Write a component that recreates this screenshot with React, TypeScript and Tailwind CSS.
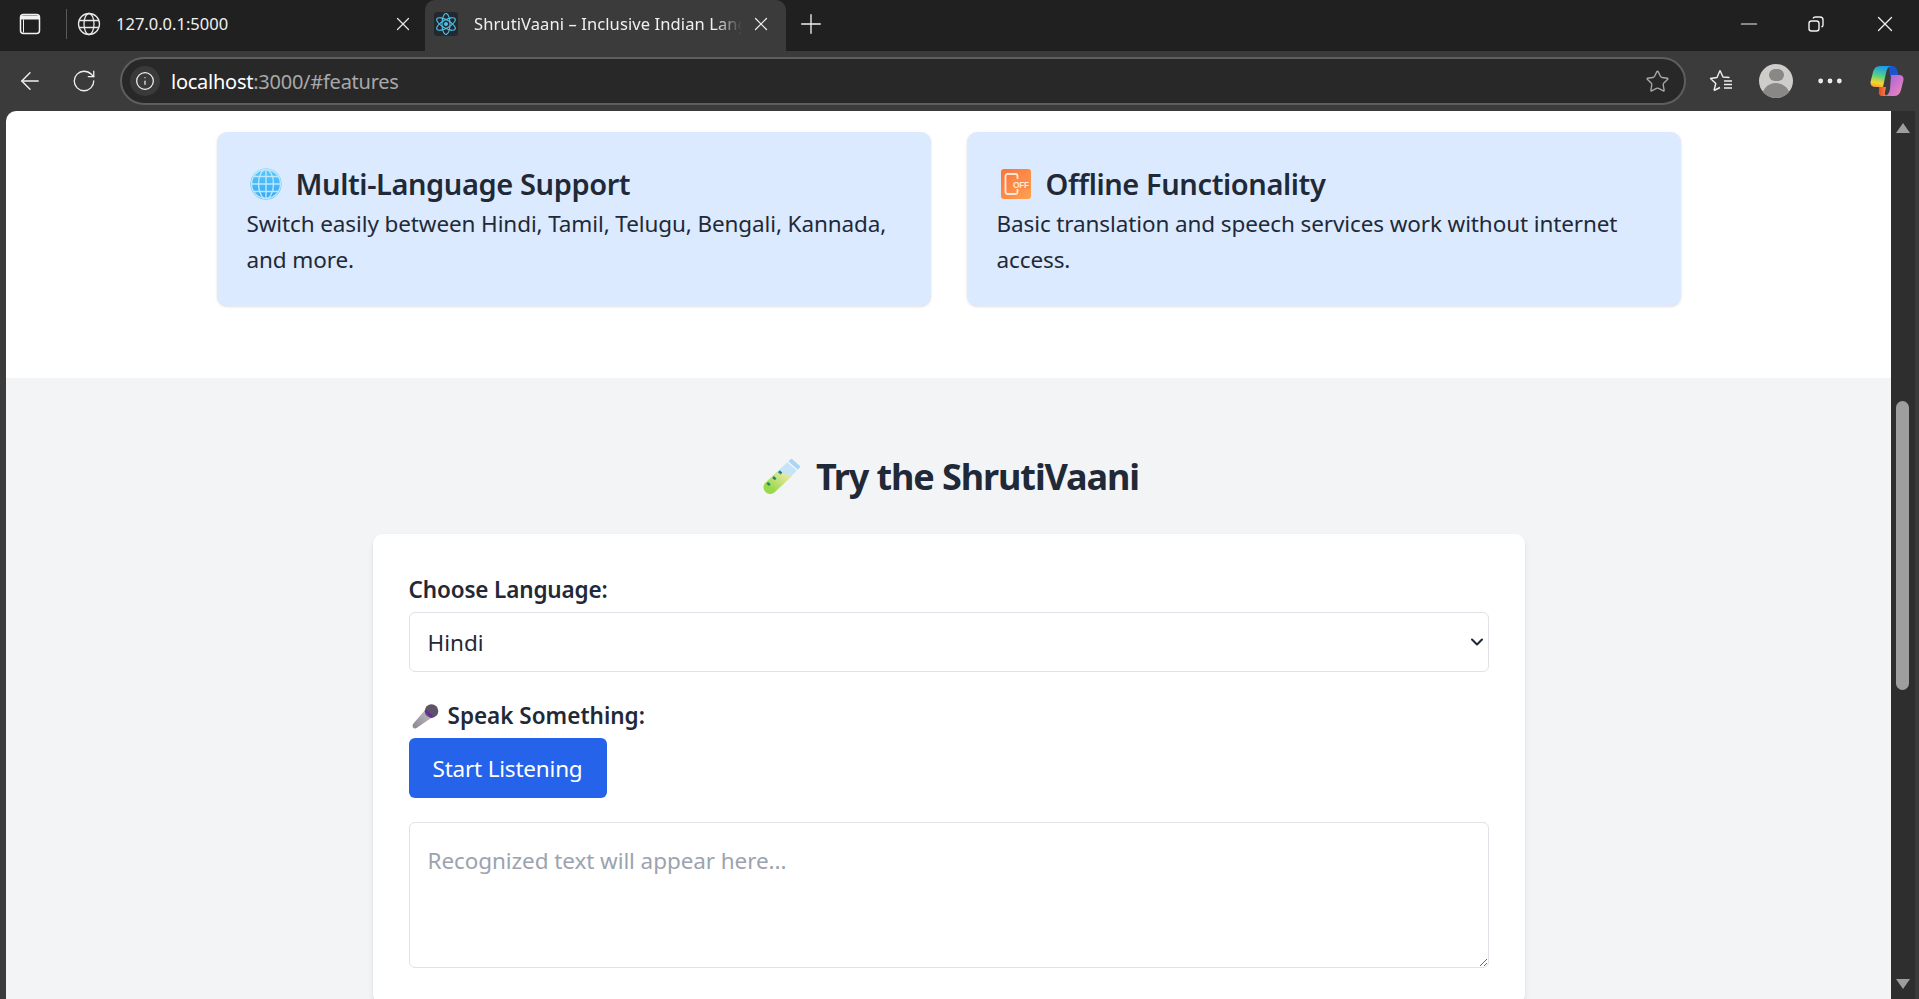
import { Minus, Plus, X, ArrowLeft, RotateCw, Info, Star, MoreHorizontal, ChevronDown } from 'lucide-react'

function GlobeEmoji() {
  return (
    <svg width="32" height="32" viewBox="0 0 32 32" className="shrink-0">
      <defs>
        <linearGradient id="globe" x1="0" y1="0" x2="0" y2="1">
          <stop offset="0" stopColor="#58c8fa" />
          <stop offset="1" stopColor="#3aa6f7" />
        </linearGradient>
      </defs>
      <circle cx="16" cy="16" r="15.500" fill="url(#globe)" />
      <g fill="none" stroke="#b9e9ff" strokeWidth="1.400">
        <circle cx="16" cy="16" r="14.500" />
        <ellipse cx="16" cy="16" rx="7.500" ry="14.500" />
        <path d="M16 2v28M2 16h28M4 8.500h24M4 23.500h24" />
      </g>
    </svg>
  )
}

function OfflineEmoji() {
  return (
    <svg width="32" height="32" viewBox="0 0 32 32" className="shrink-0">
      <defs>
        <linearGradient id="off" x1="0" y1="0" x2="1" y2="1">
          <stop offset="0" stopColor="#f9743c" />
          <stop offset="1" stopColor="#ffa150" />
        </linearGradient>
      </defs>
      <rect x="1" y="1" width="30" height="30" rx="3" fill="url(#off)" />
      <rect x="5.500" y="6" width="12" height="20" rx="2" fill="none" stroke="#ffe6d6" strokeWidth="1.800" />
      <rect x="12" y="11" width="18" height="10" fill="#fb8d48" />
      <text x="13" y="19.500" fontSize="8.500" fontFamily="Liberation Sans, sans-serif" fill="#ffe6d6">OFF</text>
    </svg>
  )
}

function TubeEmoji() {
  return (
    <svg width="38" height="37" viewBox="0 0 36 35" className="shrink-0">
      <defs>
        <linearGradient id="liquid" x1="0" y1="1" x2="1" y2="0">
          <stop offset="0.25" stopColor="#9bd94a" />
          <stop offset="0.8" stopColor="#e3e79c" />
        </linearGradient>
      </defs>
      <path d="M23 4 L32 12 L11 32.500 A6.300 6.300 0 0 1 1.800 24 Z" fill="#c6e4f8" />
      <path d="M13.500 13 L27.500 17 L11 32.500 A6.300 6.300 0 0 1 1.800 24 Z" fill="url(#liquid)" />
      <path d="M27 0.500 L35.500 8 L33 11 L24 3 Z" fill="#a9d6f5" />
      <path d="M4 23.500l2.500 2.200M9.500 18l2.500 2.200M15 12.500l2.500 2.200" stroke="#168a70" strokeWidth="2.400" />
    </svg>
  )
}

function MicEmoji() {
  return (
    <svg width="28" height="25" viewBox="0 0 28 25" className="shrink-0">
      <defs>
        <linearGradient id="mic" x1="0" y1="1" x2="1" y2="0">
          <stop offset="0" stopColor="#8a8590" />
          <stop offset="1" stopColor="#c4c0c8" />
        </linearGradient>
      </defs>
      <path d="M13 6 L20 13.500 L4.500 24 Q2.500 25 1 23.500 Q0 22 1 20 Z" fill="url(#mic)" />
      <circle cx="19.500" cy="7" r="6.800" fill="#5d5567" />
      <path d="M13 8 L14.200 5.500 L22 13 L19 14 Z" fill="#6a2c91" />
    </svg>
  )
}

function ReactIcon() {
  return (
    <svg width="24" height="24" viewBox="0 0 24 24" fill="none" stroke="#4fc3e8" strokeWidth="1.100">
      <circle cx="12" cy="12" r="2" fill="#4fc3e8" stroke="none" />
      <ellipse cx="12" cy="12" rx="4" ry="10.500" />
      <ellipse cx="12" cy="12" rx="4" ry="10.500" transform="rotate(60 12 12)" />
      <ellipse cx="12" cy="12" rx="4" ry="10.500" transform="rotate(120 12 12)" />
    </svg>
  )
}

function CopilotLogo() {
  return (
    <svg width="34" height="32" viewBox="0 0 34 32">
      <defs>
        <linearGradient id="cpA" x1="0.500" y1="0" x2="0.300" y2="1">
          <stop offset="0" stopColor="#1f9be8" />
          <stop offset="0.45" stopColor="#4fd08a" />
          <stop offset="0.8" stopColor="#f7d52e" />
          <stop offset="1" stopColor="#f9a62e" />
        </linearGradient>
        <linearGradient id="cpB" x1="0" y1="0" x2="1" y2="1">
          <stop offset="0" stopColor="#a05ee0" />
          <stop offset="1" stopColor="#f48ab8" />
        </linearGradient>
        <linearGradient id="cpC" x1="0" y1="0" x2="1" y2="0">
          <stop offset="0" stopColor="#e8432c" />
          <stop offset="1" stopColor="#f9914f" />
        </linearGradient>
      </defs>
      <path d="M19 1 Q25 0 27 5 L29 11 L20 11 Z" fill="#1a55cf" />
      <path d="M10 1 H21 Q17 2 16 8 L13 22 H6 Q0 22 0.500 17 L3 7 Q4.500 1 10 1 Z" fill="url(#cpA)" />
      <path d="M21 10 H29 Q34 10 33.500 15 L31 25 Q29.500 31 24 31 H15 Q19 30 20 24 Z" fill="url(#cpB)" />
      <path d="M9 22 H16 L15 27 Q14 31 18 31 H12 Q8 31 9 25 Z" fill="url(#cpC)" />
    </svg>
  )
}

function FavoritesIcon() {
  return (
    <svg width="26" height="26" viewBox="0 0 26 26" fill="none" stroke="#f0f0f0" strokeWidth="1.400" strokeLinejoin="round">
      <path d="M11 2.500 L14 9 L20.500 9.500 M5 22.500 L6.800 15.500 L1.500 10.500 L8 9.500 L11 2.500 M5 22.500 L11 19.500" />
      <path d="M15 13h8M15 16.500h8M15 20h8" />
    </svg>
  )
}

function Browser() {
  return (
    <div className="shrink-0 font-['Noto_Sans',sans-serif] text-white">
      {/* tab strip */}
      <div className="flex h-[51px] items-center bg-[#202020]">
        <div className="flex w-[66px] justify-center pr-[6px] pb-[3px]">
          <svg width="22" height="22" viewBox="0 0 22 22" fill="none" stroke="#f2f2f2" strokeWidth="1.500">
            <rect x="1.500" y="1.500" width="19" height="19" rx="3" />
            <path d="M2 2.500h18v4H2z" fill="#f2f2f2" stroke="none" />
            <path d="M4.500 6.500v13" strokeWidth="1" />
          </svg>
        </div>
        <div className="mb-[3px] h-[30px] w-px bg-[#5a5a5a]" />
        <div className="flex w-[358px] items-center pb-[3px] pl-[10px]">
          <svg width="24" height="24" viewBox="0 0 24 24" fill="none" stroke="#e8e8e8" strokeWidth="1.300">
            <circle cx="12" cy="12" r="10.500" />
            <ellipse cx="12" cy="12" rx="5" ry="10.500" />
            <path d="M2 8.500h20M2 15.500h20" />
          </svg>
          <span className="ml-[15px] flex-1 text-[16.5px] text-[#f0f0f0]">127.0.0.1:5000</span>
          <X className="mr-[11px] h-[22px] w-[22px] text-[#e8e8e8]" strokeWidth={1.300} />
        </div>
        <div className="flex h-full w-[361px] items-center self-end rounded-t-[10px] bg-[#3b3b3b] pr-[14px] pb-[3px] pl-[9px]">
          <div className="flex h-[24px] w-[24px] items-center justify-center rounded-[3px] bg-[#23272f]">
            <ReactIcon />
          </div>
          <span className="ml-[16px] w-[268px] overflow-hidden whitespace-nowrap text-[16.5px] tracking-[0.1px] text-[#f0f0f0] [mask-image:linear-gradient(to_right,black_90%,transparent)]">
            ShrutiVaani – Inclusive Indian Language
          </span>
          <X className="ml-auto h-[22px] w-[22px] text-[#f0f0f0]" strokeWidth={1.300} />
        </div>
        <Plus className="mb-[3px] ml-[9px] h-[32px] w-[32px] text-[#f0f0f0]" strokeWidth={1} />
        <div className="ml-auto flex items-center pb-[3px]">
          <Minus className="mr-[45px] h-[26px] w-[26px] text-[#f0f0f0]" strokeWidth={1.100} />
          <svg width="18" height="18" viewBox="0 0 18 18" fill="none" stroke="#f0f0f0" strokeWidth="1.400" className="mr-[47px]">
            <rect x="2" y="6" width="10" height="10" rx="2.500" />
            <path d="M6 3.500 Q6.500 2 8.500 2 H13 Q16 2 16 5 V10 Q16 11.500 14.500 12" />
          </svg>
          <X className="mr-[21px] h-[26px] w-[26px] text-[#f0f0f0]" strokeWidth={1.200} />
        </div>
      </div>
      {/* toolbar */}
      <div className="flex h-[60px] items-center bg-[#3b3b3b]">
        <div className="flex w-[60px] justify-center">
          <ArrowLeft className="h-[28px] w-[28px] text-[#f0f0f0]" strokeWidth={1.200} />
        </div>
        <div className="flex w-[48px] justify-center">
          <RotateCw className="h-[26px] w-[26px] text-[#f0f0f0]" strokeWidth={1.200} />
        </div>
        <div className="ml-[12px] flex h-[48px] w-[1566px] items-center rounded-full border-2 border-[#5e5e5e] bg-[#282828] pr-[14px] pl-[8px]">
          <div className="flex h-[30px] w-[30px] items-center justify-center rounded-full bg-[#3a3a3a]">
            <Info className="h-[20px] w-[20px] text-[#f0f0f0]" strokeWidth={1.500} />
          </div>
          <span className="ml-[11px] pt-[1px] text-[20px] tracking-[-0.25px] text-white">
            localhost<span className="text-[#a8a8a8]">:3000/#features</span>
          </span>
          <Star className="ml-auto h-[25px] w-[25px] text-[#a8a8a8]" strokeWidth={1.300} />
        </div>
        <div className="ml-[23px] flex w-[26px] justify-center">
          <FavoritesIcon />
        </div>
        <div className="ml-[24px] flex h-[34px] w-[34px] flex-col items-center overflow-hidden rounded-full bg-[#cfcdc9]">
          <div className="mt-[5px] h-[15px] w-[15px] rounded-full bg-[#8a8885]" />
          <div className="mt-[2px] h-[20px] w-[28px] rounded-t-full bg-[#8a8885]" />
        </div>
        <div className="ml-[27px] flex w-[20px] justify-center">
          <MoreHorizontal className="h-[32px] w-[32px] shrink-0 text-[#f0f0f0]" strokeWidth={1.600} />
        </div>
        <div className="ml-[30px]">
          <CopilotLogo />
        </div>
      </div>
    </div>
  )
}

function FeatureCard({ icon, title, text }: { icon: React.ReactNode; title: string; text: string }) {
  return (
    <div className="h-[174px] w-[714px] rounded-[10px] bg-[#dbeafe] px-[30px] pt-[31px] shadow-sm">
      <h3 className="mb-[1px] flex h-[42px] items-center gap-[14px] text-[29px] font-semibold tracking-[-0.4px] text-[#1f2937]">
        <span className="ml-[3px]">{icon}</span>
        {title}
      </h3>
      <p className="text-[22.5px] leading-[36px] tracking-[-0.11px] text-[#1f2937]">{text}</p>
    </div>
  )
}

function Scrollbar() {
  return (
    <div className="flex w-[28px] shrink-0 flex-col border-r-4 border-[#3b3b3b] bg-[#2e2e2e] pr-[6px] pl-[5px]">
      <div className="mt-[12px] h-0 w-0 self-center border-x-[7px] border-b-[10px] border-x-transparent border-b-[#9e9e9e]" />
      <div className="mt-[268px] h-[289px] rounded-full bg-[#9e9e9e]" />
      <div className="mt-auto mb-[10px] h-0 w-0 self-center border-x-[7px] border-t-[10px] border-x-transparent border-t-[#9e9e9e]" />
    </div>
  )
}

export default function App() {
  return (
    <div className="flex h-[999px] w-[1919px] flex-col overflow-hidden bg-[#3b3b3b] font-['Noto_Sans',sans-serif]">
      <Browser />
      <div className="flex min-h-0 flex-1 pl-[6px]">
        <main className="flex-1 overflow-hidden rounded-tl-[10px] bg-white">
          <section className="flex h-[267px] items-start justify-center gap-[36px] pt-[21px]">
            <FeatureCard
              icon={<GlobeEmoji />}
              title="Multi-Language Support"
              text="Switch easily between Hindi, Tamil, Telugu, Bengali, Kannada, and more."
            />
            <FeatureCard
              icon={<OfflineEmoji />}
              title="Offline Functionality"
              text="Basic translation and speech services work without internet access."
            />
          </section>
          <section className="h-[700px] bg-[#f3f4f6] pt-[75px]">
            <h2 className="mb-[34px] flex h-[47px] items-center justify-center gap-[15px] pl-[5px] text-[36px] font-bold tracking-[-1.1px] text-[#1f2937]">
              <TubeEmoji />
              Try the ShrutiVaani
            </h2>
            <div className="mx-auto w-[1152px] rounded-[10px] bg-white px-[36px] pt-[38px] pb-[36px] shadow-md">
              <label className="mb-[4px] block h-[36px] text-[22.5px] leading-[36px] font-semibold tracking-[-0.15px] text-[#1f2937]">
                Choose Language:
              </label>
              <div className="relative mb-[24px]">
                <select className="h-[60px] w-full appearance-none rounded-[6px] border border-[#dfe2e6] bg-white px-[18px] pt-[2px] text-[22.5px] text-[#1f2937]">
                  <option>Hindi</option>
                </select>
                <ChevronDown className="absolute top-[20px] right-[2px] h-[20px] w-[20px] text-[#1f2937]" strokeWidth={2.500} />
              </div>
              <label className="mb-[4px] flex h-[38px] items-center gap-[8px] pt-[2px] text-[22.5px] font-semibold text-[#1f2937]">
                <span className="ml-[3px]"><MicEmoji /></span>
                Speak Something:
              </label>
              <button className="mb-[24px] block h-[60px] w-[198px] rounded-[6px] bg-[#2563eb] pt-[2px] text-[22.5px] tracking-[-0.2px] text-white">
                Start Listening
              </button>
              <textarea
                className="block h-[146px] w-full rounded-[6px] border border-[#dfe2e6] px-[18px] pt-[21px] text-[22.5px] tracking-[-0.08px] placeholder:text-[#9ca3af]"
                placeholder="Recognized text will appear here..."
              />
            </div>
          </section>
        </main>
        <Scrollbar />
      </div>
    </div>
  )
}
